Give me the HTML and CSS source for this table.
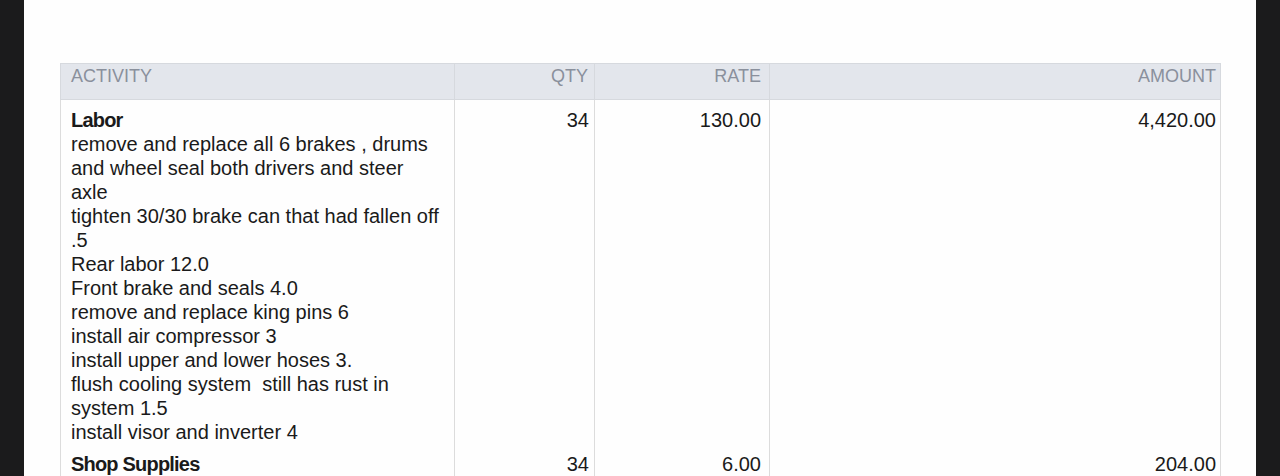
FILE: index.html
```html
<!DOCTYPE html>
<html>
<head>
<meta charset="utf-8">
<link rel="stylesheet" href="styles.css">
</head>
<body>
<div class="page">
  <table class="items">
    <colgroup>
      <col class="c-act"><col class="c-qty"><col class="c-rate"><col class="c-amt">
    </colgroup>
    <thead>
      <tr>
        <th class="left">ACTIVITY</th>
        <th class="num">QTY</th>
        <th class="num rate">RATE</th>
        <th class="num amt">AMOUNT</th>
      </tr>
    </thead>
    <tbody>
      <tr>
        <td class="left">
          <div class="name">Labor</div>
          <div class="desc">remove and replace all 6 brakes , drums and wheel seal both drivers and steer axle<br>tighten 30/30 brake can that had fallen off .5<br>Rear labor 12.0<br>Front brake and seals 4.0<br>remove and replace king pins 6<br>install air compressor 3<br>install upper and lower hoses 3.<br>flush cooling system&nbsp; still has rust in system 1.5<br>install visor and inverter 4</div>
        </td>
        <td class="num">34</td>
        <td class="num rate">130.00</td>
        <td class="num amt">4,420.00</td>
      </tr>
      <tr class="last">
        <td class="left">
          <div class="name">Shop Supplies</div>
        </td>
        <td class="num">34</td>
        <td class="num rate">6.00</td>
        <td class="num amt">204.00</td>
      </tr>
    </tbody>
  </table>
</div>
</body>
</html>
```

FILE: styles.css
```css
html, body {
  margin: 0;
  padding: 0;
  height: 100%;
  background: #1b1b1c;
  overflow: hidden;
}
body {
  font-family: "Liberation Sans", Arial, sans-serif;
  color: #1a1a1a;
}
.page {
  margin: 0 24px;
  background: #fefefe;
  height: 100%;
  padding: 63px 36px 0 36px;
  box-sizing: border-box;
}
.items {
  width: 1160px;
  border-collapse: collapse;
  table-layout: fixed;
}
.c-act { width: 394px; }
.c-qty { width: 140px; }
.c-rate { width: 175px; }
.c-amt { width: 451px; }
.items th {
  background: #e3e6ec;
  color: #8a909c;
  font-weight: normal;
  font-size: 18px;
  height: 35px;
  padding: 0 6px 11px 10px;
  border: 1px solid #d6d9de;
  box-sizing: border-box;
  vertical-align: middle;
  line-height: 24px;
}
.items td {
  font-size: 20px;
  line-height: 24px;
  padding: 8px 5px 0 10px;
  border-left: 1px solid #dcdcdc;
  border-right: 1px solid #dcdcdc;
  vertical-align: top;
}
.left { text-align: left; }
.num { text-align: right; }
.items .rate { padding-right: 8px; }
.items .amt { padding-right: 4px; }
.name { font-weight: bold; letter-spacing: -0.8px; }
.desc { width: 371px; }
```
